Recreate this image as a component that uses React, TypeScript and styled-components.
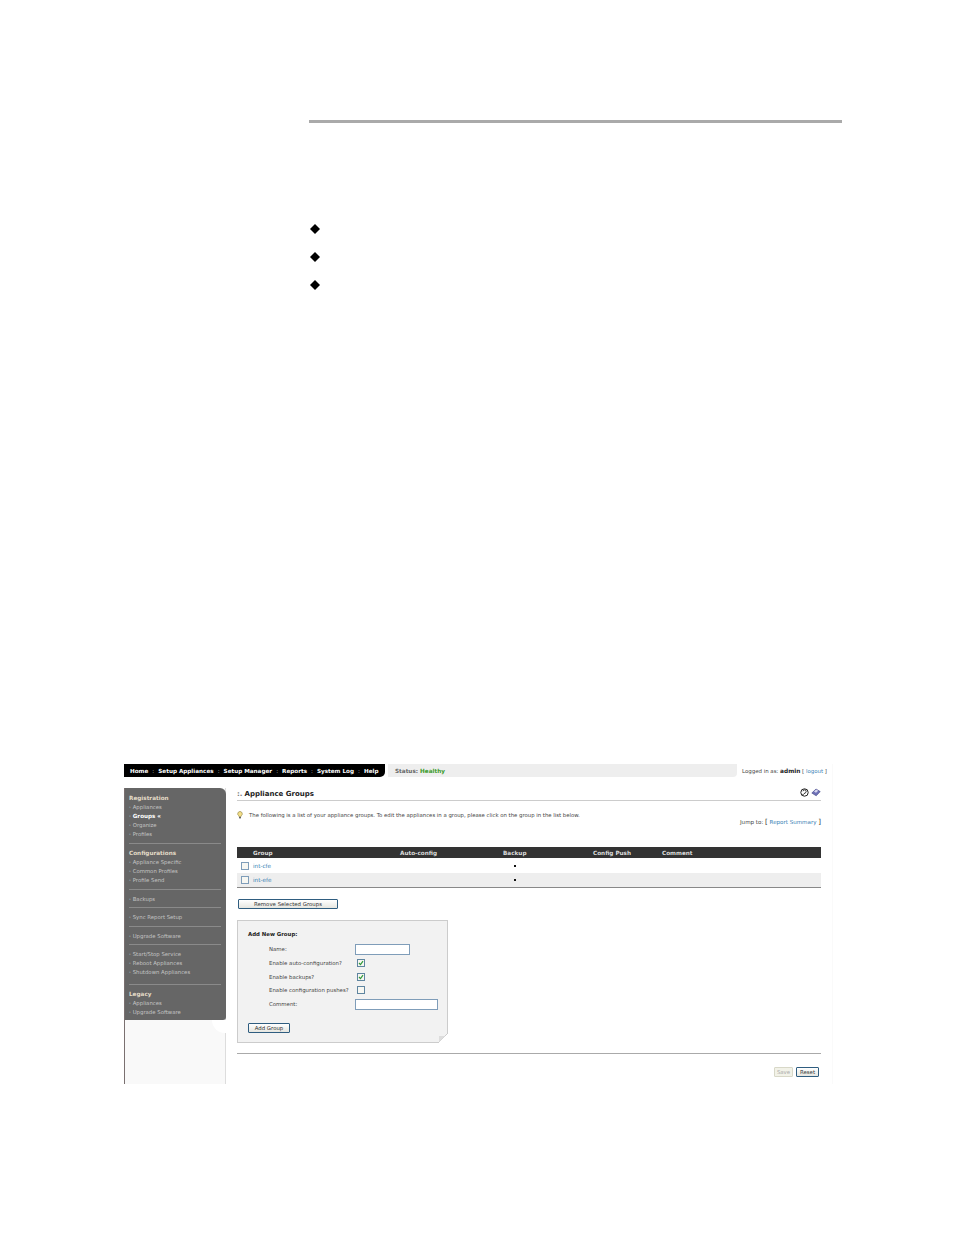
import React from 'react';
import styled, { createGlobalStyle } from 'styled-components';

const GlobalStyle = createGlobalStyle`
  html, body {
    margin: 0;
    padding: 0;
    background: #fff;
  }
`;

const Page = styled.div`
  width: 954px;
  height: 1235px;
  padding-top: 120px;
  box-sizing: border-box;
  overflow: hidden;
`;

const Rule = styled.div`
  width: 533px;
  height: 3px;
  margin-left: 309px;
  background: #aaa;
`;

const Bullets = styled.div`
  display: flex;
  flex-direction: column;
  gap: 18px;
  margin: 101px 0 0 310px;
`;

const Diamond = styled.div`
  width: 10px;
  height: 10px;
  background: #000;
  clip-path: polygon(50% 0, 100% 50%, 50% 100%, 0 50%);
`;

const Shot = styled.div`
  width: 708px;
  height: 320px;
  margin: 474px 0 0 124px;
  background: #fff;
  border-right: 1px solid #fafafa;
  font-family: 'DejaVu Sans', Verdana, sans-serif;
  font-size: 6px;
  color: #333;
  display: flex;
  flex-direction: column;
`;

const TopRow = styled.div`
  display: flex;
  align-items: stretch;
  height: 13px;
`;

const Nav = styled.div`
  width: 261px;
  background: #000;
  border-bottom-right-radius: 5px;
  display: flex;
  align-items: center;
  padding-left: 6px;
  box-sizing: border-box;
  color: #fff;
  font-weight: bold;
  font-size: 5.65px;
  white-space: nowrap;
`;

const NavSep = styled.span`
  color: #bbb;
  width: 10px;
  text-align: center;
  font-weight: normal;
`;

const Status = styled.div`
  width: 349px;
  margin-left: 3px;
  background: #eee;
  border-bottom-right-radius: 4px;
  display: flex;
  align-items: center;
  gap: 2px;
  padding-left: 7px;
  box-sizing: border-box;
  font-weight: bold;
  font-size: 5.7px;
  color: #666;
`;

const Healthy = styled.span`
  color: #3a9a2a;
`;

const Login = styled.div`
  margin-left: 5px;
  align-self: center;
  white-space: nowrap;
  font-size: 5.45px;
  color: #444;

  b {
    color: #222;
    font-size: 5.8px;
  }
`;

const Link = styled.a`
  color: #3a7fb5;
`;

const Body = styled.div`
  flex: 1;
  display: flex;
  min-height: 0;
`;

const Side = styled.div`
  width: 102px;
  margin-top: 11px;
  display: flex;
  flex-direction: column;
  border-left: 1px solid #7a7070;
  border-right: 1px solid #ddd;
  box-sizing: border-box;
  position: relative;
`;

const SideMenu = styled.div`
  height: 232px;
  width: 101px;
  box-sizing: border-box;
  background: #666;
  border-top-right-radius: 6px;
  border-bottom-right-radius: 3px;
  padding: 6px 5px 0 4px;
  color: #c4c4c4;
  font-size: 5.35px;
`;

const SideFill = styled.div`
  flex: 1;
  background: #f9f9f9;
`;

const Notch = styled.div`
  position: absolute;
  right: -1px;
  top: 232px;
  width: 14px;
  height: 13px;
  background: #fff;
  border-bottom-left-radius: 13px;
`;

const SideGroup = styled.div<{ $pb: number }>`
  padding-bottom: ${(p) => p.$pb}px;
  margin-bottom: 5px;
  border-bottom: 1px solid #8a8a8a;

  &:last-child {
    border-bottom: 0;
  }
`;

const SideHead = styled.div`
  height: 9px;
  line-height: 9px;
  font-size: 5.7px;
  font-weight: bold;
  color: #e4dcc8;
  white-space: nowrap;
`;

const SideItem = styled.div<{ $active?: boolean }>`
  height: 9px;
  line-height: 9px;
  white-space: nowrap;
  color: ${(p) => (p.$active ? '#fff' : '#c4c4c4')};
  font-weight: ${(p) => (p.$active ? 'bold' : 'normal')};
  font-size: ${(p) => (p.$active ? '5.6px' : 'inherit')};

  &::before {
    content: '·';
    margin-right: 2px;
    font-weight: normal;
    color: #eee;
  }
`;

const Main = styled.div`
  width: 584px;
  margin-left: 11px;
  display: flex;
  flex-direction: column;
`;

const TitleRow = styled.div`
  height: 10px;
  margin-top: 12px;
  border-bottom: 1px solid #ccc;
  display: flex;
  align-items: center;
  justify-content: space-between;
  padding-bottom: 1px;
`;

const Title = styled.div`
  font-weight: bold;
  font-size: 7px;
  color: #222;
  white-space: nowrap;

  span {
    color: #777;
    margin-right: 2px;
  }
`;

const Tools = styled.div`
  display: flex;
  gap: 2px;
  margin-bottom: 3px;
`;

const IntroRow = styled.div`
  display: flex;
  justify-content: space-between;
  height: 46px;
  padding-top: 10px;
  box-sizing: border-box;
  white-space: nowrap;
  font-size: 5.55px;
  color: #444;
`;

const Intro = styled.div`
  display: flex;
  align-items: flex-start;
  gap: 6px;
  line-height: 9px;
  font-size: 5.35px;
`;

const Jump = styled.div`
  margin-top: 7px;
  line-height: 9px;

  b {
    font-weight: normal;
    color: #333;
    font-size: 7px;
  }
`;

const TableRow = styled.div`
  display: grid;
  grid-template-columns: 16px 147px 103px 90px 69px 1fr;
  align-items: center;
`;

const TableHead = styled(TableRow)`
  height: 11px;
  background: #333;
  color: #ddd;
  font-weight: bold;
  font-size: 5.7px;
`;

const DataRow = styled(TableRow)<{ $alt?: boolean }>`
  height: ${(p) => (p.$alt ? 14 : 15)}px;
  background: ${(p) => (p.$alt ? '#eee' : '#fff')};
  border-bottom: ${(p) => (p.$alt ? '1px solid #888' : '0')};
  font-size: 5.7px;
`;

const Check = styled.div`
  width: 8px;
  height: 8px;
  box-sizing: border-box;
  border: 1px solid #5f85a0;
  background: #f7f7f2;
  display: flex;
  align-items: center;
  justify-content: center;
`;

const RowCheck = styled(Check)`
  margin-left: 4px;
  border-color: #7f9db9;
`;

const Dot = styled.div`
  width: 2px;
  height: 2px;
  margin-left: 11px;
  background: #111;
`;

const Button = styled.button<{ $w: number; $muted?: boolean }>`
  width: ${(p) => p.$w}px;
  height: 10px;
  padding: 0;
  border: 1px solid ${(p) => (p.$muted ? '#d8d8c8' : '#2f5d80')};
  border-radius: 1px;
  background: ${(p) => (p.$muted ? '#f2f2e8' : 'linear-gradient(#fff, #e6e6e0)')};
  color: ${(p) => (p.$muted ? '#aaa' : '#333')};
  font-family: inherit;
  font-size: 5.4px;
  line-height: 8px;
  white-space: nowrap;
  box-sizing: border-box;
`;

const RemoveBar = styled.div`
  margin: 11px 0 0 1px;
`;

const Panel = styled.div`
  width: 211px;
  height: 123px;
  margin-top: 11px;
  box-sizing: border-box;
  border: 1px solid #ccc;
  background: #f2f2f2;
  padding: 9px 10px 0;
  position: relative;
`;

const Fold = styled.svg`
  position: absolute;
  right: -1px;
  bottom: -1px;
`;

const PanelTitle = styled.div`
  font-weight: bold;
  font-size: 5.4px;
  line-height: 9px;
  color: #222;
  margin-bottom: 3.5px;
`;

const Fields = styled.div`
  display: grid;
  grid-template-columns: 86px 1fr;
  margin-left: 21px;
  font-size: 5.4px;
  color: #444;
  white-space: nowrap;
`;

const FieldRow = styled.div`
  display: contents;
`;

const FieldLabel = styled.div`
  height: 13.7px;
  display: flex;
  align-items: center;
`;

const FieldCell = styled.div`
  height: 13.7px;
  display: flex;
  align-items: center;
`;

const TextBox = styled.div<{ $w: number }>`
  width: ${(p) => p.$w}px;
  height: 11px;
  box-sizing: border-box;
  border: 1px solid #7f9db9;
  background: #fff;
`;

const FieldCheck = styled(Check)`
  margin-left: 2px;
`;

const AddBar = styled.div`
  margin-top: 12.5px;
`;

const Divider = styled.div`
  height: 1px;
  margin-top: 10px;
  background: #aaa;
`;

const Actions = styled.div`
  display: flex;
  justify-content: flex-end;
  gap: 3px;
  margin: 13px 2px 0 0;
`;

const Tick = () => (
  <svg width="6" height="6" viewBox="0 0 6 6">
    <path d="M1 3 L2.5 4.6 L5 1.2" fill="none" stroke="#2f9a3a" strokeWidth="1.2" />
  </svg>
);

const Bulb = () => (
  <svg width="6" height="8" viewBox="0 0 6 8">
    <path d="M3 .5 A2.3 2.3 0 0 1 4.4 4.6 L4 5.6 H2 L1.6 4.6 A2.3 2.3 0 0 1 3 .5 Z" fill="#f4df8a" stroke="#8a7a30" strokeWidth=".6" />
    <rect x="2.1" y="6" width="1.8" height="1.4" fill="#555" />
  </svg>
);

const HelpIcon = () => (
  <svg width="9" height="9" viewBox="0 0 9 9">
    <circle cx="4.5" cy="4.5" r="3.7" fill="#fff" stroke="#222" strokeWidth="1" />
    <path d="M3 3.2 A1.6 1.6 0 1 1 4.7 5 L4.5 6" fill="none" stroke="#333" strokeWidth="1" />
    <path d="M1.5 7 L3.5 5.5 L4 7.8 Z" fill="#555" />
  </svg>
);

const PrintIcon = () => (
  <svg width="10" height="9" viewBox="0 0 10 9">
    <path d="M.8 5 L5 1 L9.2 3.6 L5.2 7.8 Z" fill="#6f72b8" stroke="#3d4080" strokeWidth=".6" />
    <path d="M3 3.6 L5.2 1.6 L7.2 2.8 L5 4.8 Z" fill="#d8d8f0" />
  </svg>
);

const navItems = ['Home', 'Setup Appliances', 'Setup Manager', 'Reports', 'System Log', 'Help'];

const groups = [
  { head: 'Registration', items: ['Appliances', 'Groups «', 'Organize', 'Profiles'], pb: 4 },
  { head: 'Configurations', items: ['Appliance Specific', 'Common Profiles', 'Profile Send'], pb: 4 },
  { items: ['Backups'], pb: 3 },
  { items: ['Sync Report Setup'], pb: 4 },
  { items: ['Upgrade Software'], pb: 3 },
  { items: ['Start/Stop Service', 'Reboot Appliances', 'Shutdown Appliances'], pb: 7 },
  { head: 'Legacy', items: ['Appliances', 'Upgrade Software'], pb: 0 },
];

export default function App() {
  return (
    <Page>
      <GlobalStyle />
      <Rule />
      <Bullets>
        <Diamond />
        <Diamond />
        <Diamond />
      </Bullets>
      <Shot>
        <TopRow>
          <Nav>
            {navItems.map((item, i) => (
              <React.Fragment key={item}>
                {i > 0 && <NavSep>:</NavSep>}
                {item}
              </React.Fragment>
            ))}
          </Nav>
          <Status>
            Status: <Healthy>Healthy</Healthy>
          </Status>
          <Login>
            Logged in as: <b>admin</b> [ <Link>logout</Link> ]
          </Login>
        </TopRow>
        <Body>
          <Side>
            <SideMenu>
              {groups.map((g, i) => (
                <SideGroup key={i} $pb={g.pb}>
                  {g.head && <SideHead>{g.head}</SideHead>}
                  {g.items.map((item) => (
                    <SideItem key={item} $active={item === 'Groups «'}>
                      {item}
                    </SideItem>
                  ))}
                </SideGroup>
              ))}
            </SideMenu>
            <SideFill />
            <Notch />
          </Side>
          <Main>
            <TitleRow>
              <Title>
                <span>:.</span>Appliance Groups
              </Title>
              <Tools>
                <HelpIcon />
                <PrintIcon />
              </Tools>
            </TitleRow>
            <IntroRow>
              <Intro>
                <Bulb />
                The following is a list of your appliance groups. To edit the appliances in a group, please click on the group in the list below.
              </Intro>
              <Jump>
                Jump to: <b>[</b> <Link>Report Summary</Link> <b>]</b>
              </Jump>
            </IntroRow>
            <TableHead>
              <span />
              <span>Group</span>
              <span>Auto-config</span>
              <span>Backup</span>
              <span>Config Push</span>
              <span>Comment</span>
            </TableHead>
            <DataRow>
              <RowCheck />
              <Link>int-cfe</Link>
              <span />
              <Dot />
            </DataRow>
            <DataRow $alt>
              <RowCheck />
              <Link>int-efe</Link>
              <span />
              <Dot />
            </DataRow>
            <RemoveBar>
              <Button $w={100}>Remove Selected Groups</Button>
            </RemoveBar>
            <Panel>
              <PanelTitle>Add New Group:</PanelTitle>
              <Fields>
                <FieldRow>
                  <FieldLabel>Name:</FieldLabel>
                  <FieldCell>
                    <TextBox $w={55} />
                  </FieldCell>
                </FieldRow>
                <FieldRow>
                  <FieldLabel>Enable auto-configuration?</FieldLabel>
                  <FieldCell>
                    <FieldCheck>
                      <Tick />
                    </FieldCheck>
                  </FieldCell>
                </FieldRow>
                <FieldRow>
                  <FieldLabel>Enable backups?</FieldLabel>
                  <FieldCell>
                    <FieldCheck>
                      <Tick />
                    </FieldCheck>
                  </FieldCell>
                </FieldRow>
                <FieldRow>
                  <FieldLabel>Enable configuration pushes?</FieldLabel>
                  <FieldCell>
                    <FieldCheck />
                  </FieldCell>
                </FieldRow>
                <FieldRow>
                  <FieldLabel>Comment:</FieldLabel>
                  <FieldCell>
                    <TextBox $w={83} />
                  </FieldCell>
                </FieldRow>
              </Fields>
              <AddBar>
                <Button $w={42}>Add Group</Button>
              </AddBar>
              <Fold width="10" height="10" viewBox="0 0 10 10">
                <path d="M10 0 L10 10 L0 10 Z" fill="#fff" />
                <path d="M0 10 L10 0" stroke="#ccc" strokeWidth="1" />
                <path d="M1 9 L1 3 L7 3 Z" fill="#ddd" />
              </Fold>
            </Panel>
            <Divider />
            <Actions>
              <Button $w={19} $muted>
                Save
              </Button>
              <Button $w={23}>Reset</Button>
            </Actions>
          </Main>
        </Body>
      </Shot>
    </Page>
  );
}
